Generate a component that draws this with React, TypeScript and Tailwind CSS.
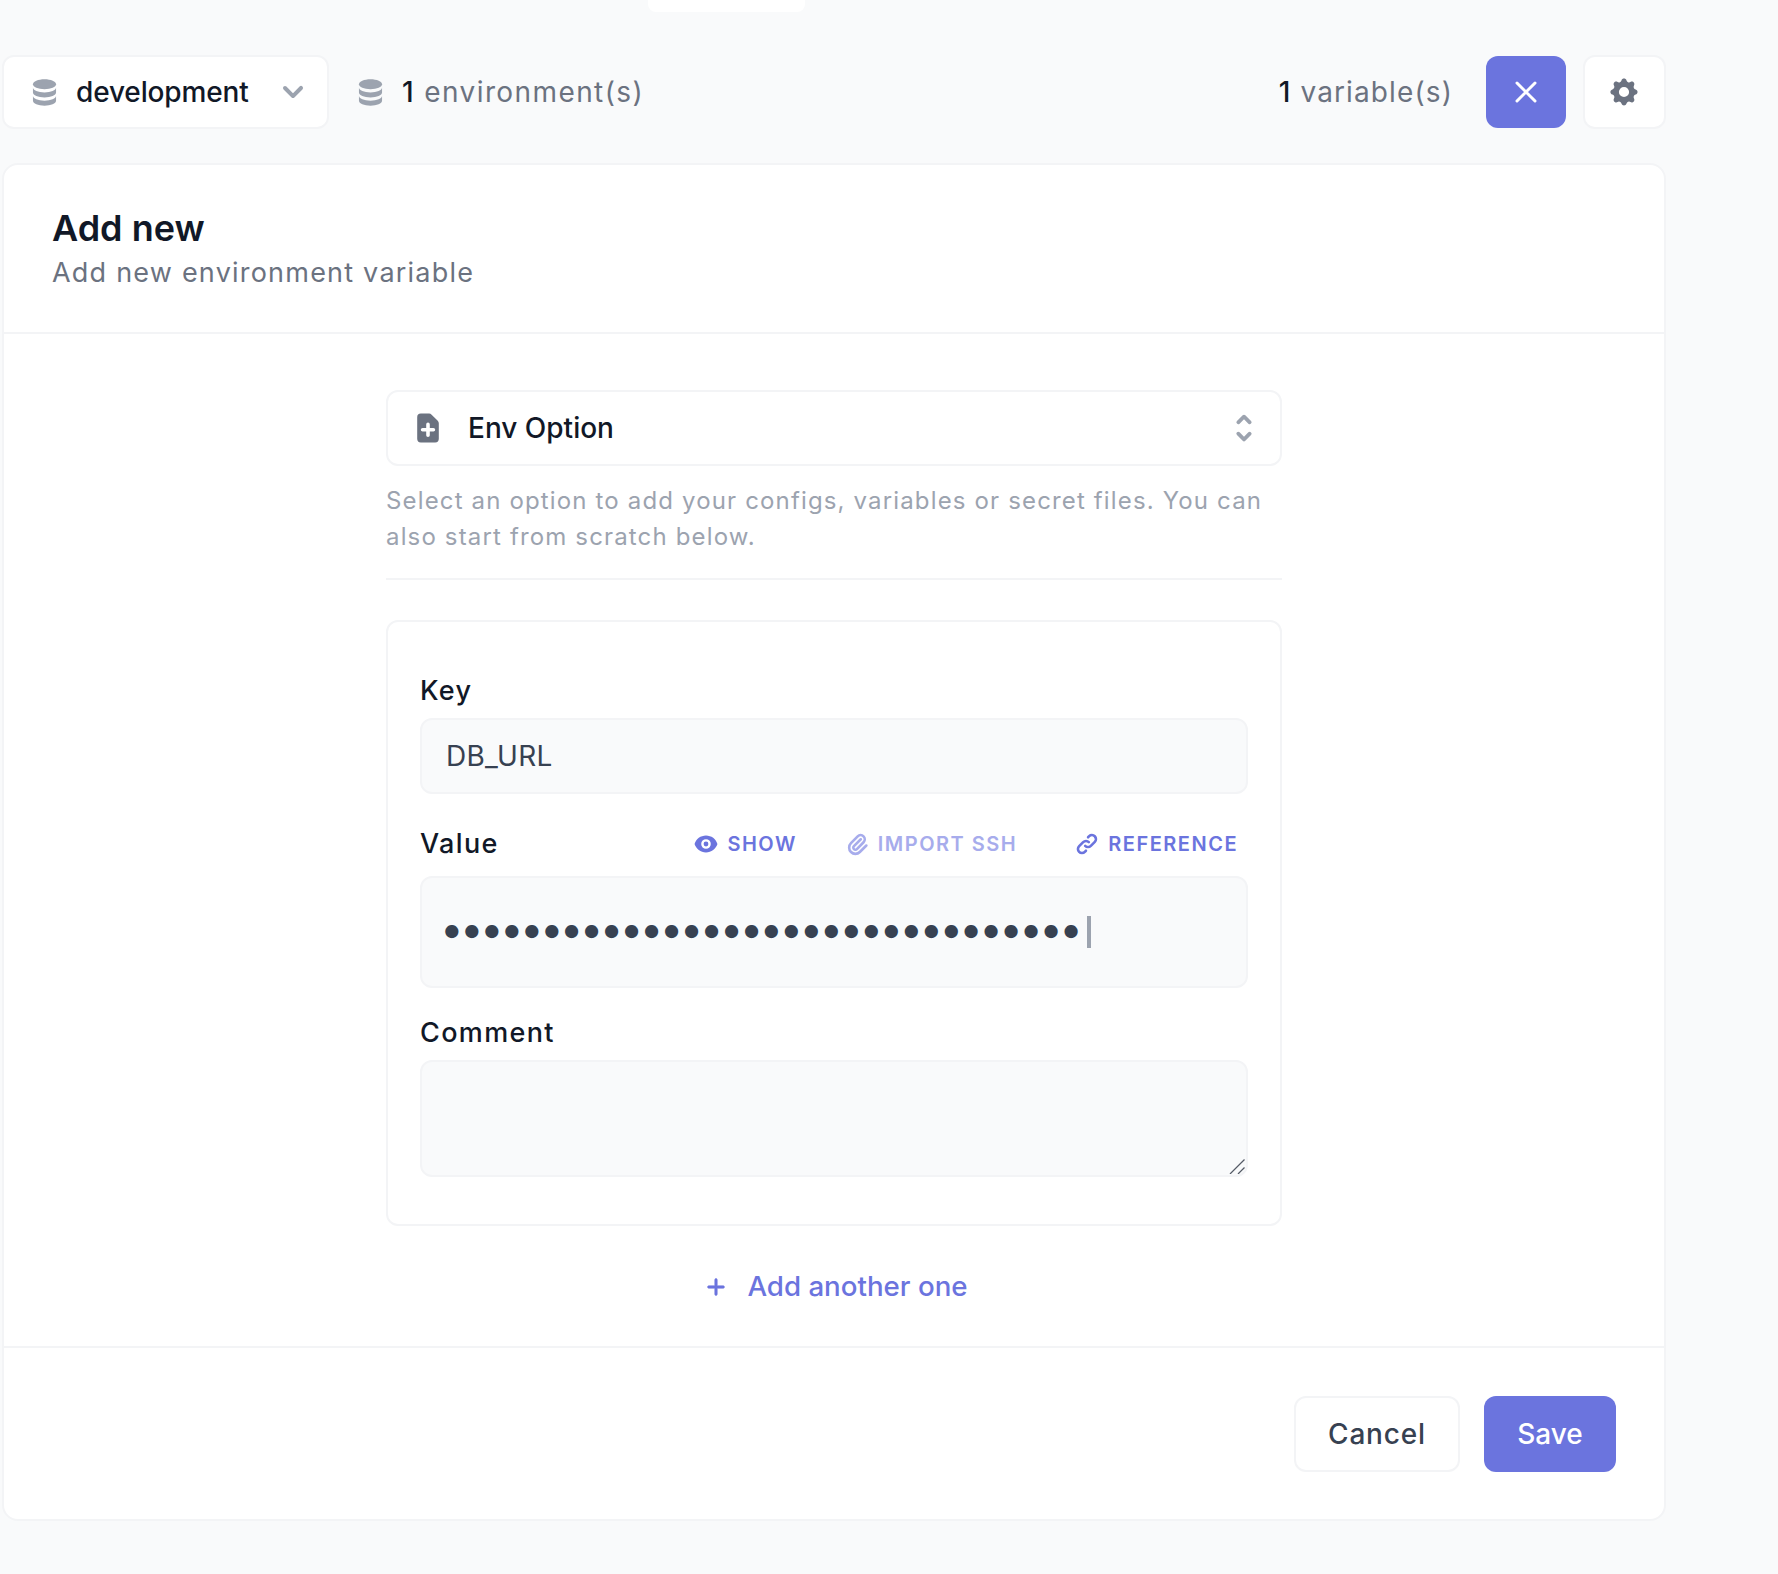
import React from "react";
import { HiDatabase, HiChevronDown, HiOutlineX, HiCog, HiDocumentAdd, HiSelector, HiEye, HiOutlinePaperClip, HiOutlineLink, HiPlus } from "react-icons/hi";

function Label({ children }: { children: React.ReactNode }) {
  return <label className="block h-[40px] text-[27px] leading-[40px] font-medium tracking-[0.05em] text-[#111827]">{children}</label>;
}

export default function App() {
  return (
    <div className="min-h-[1574px] bg-[#f9fafb] font-[Inter,sans-serif]">
      <div className="ml-[648px] h-[12px] w-[157px] rounded-b-[8px] bg-white" />
      <div className="mt-[43px] ml-[2px] flex h-[74px] w-[1664px] items-center">
        <button className="flex h-[74px] w-[327px] items-center rounded-[12px] border-2 border-[#f3f4f6] bg-white pl-[24px]">
          <HiDatabase size={33} className="text-[#9ca3af]" />
          <span className="ml-[15px] text-[28px] font-medium tracking-[-0.005em] text-[#111827]">development</span>
          <HiChevronDown size={40} className="ml-[24px] text-[#9ca3af]" />
        </button>
        <HiDatabase size={33} className="ml-[25px] text-[#9ca3af]" />
        <span className="ml-[15px] text-[28px] tracking-[0.05em] text-[#6b7280]"><span className="font-medium text-[#111827]">1</span> environment(s)</span>
        <span className="ml-auto text-[28px] tracking-[0.04em] text-[#6b7280]"><span className="font-medium text-[#111827]">1</span> variable(s)</span>
        <button className="ml-[33px] flex h-[72px] w-[80px] items-center justify-center rounded-[12px] bg-[#6b74de] text-white">
          <HiOutlineX size={36} />
        </button>
        <button className="ml-[17px] flex h-[74px] w-[83px] items-center justify-center rounded-[12px] border-2 border-[#f3f4f6] bg-white pr-[2px] text-[#6b7280]">
          <HiCog size={34} />
        </button>
      </div>
      <main className="mt-[34px] ml-[2px] w-[1664px] rounded-[16px] border-2 border-[#f3f4f6] bg-white">
        <header className="h-[169px] border-b-2 border-[#f3f4f6] pt-[41px] pl-[48px]">
          <h1 className="text-[36px] leading-[44px] font-semibold text-[#111827]">Add new</h1>
          <p className="mt-[5px] text-[27px] leading-[36px] tracking-[0.045em] text-[#6b7280]">Add new environment variable</p>
        </header>
        <section className="mx-auto w-[896px] pt-[56px]">
          <div className="flex h-[76px] items-center rounded-[12px] border-2 border-[#f3f4f6] bg-white pr-[17px] pl-[22px]">
            <HiDocumentAdd size={36} className="text-[#6b7280]" />
            <span className="ml-[22px] text-[28px] font-medium text-[#111827]">Env Option</span>
            <HiSelector size={38} className="ml-auto text-[#9ca3af]" />
          </div>
          <div className="border-b-2 border-[#f3f4f6] pt-[17px] pb-[23px]">
            <p className="text-[24px] leading-[36px] tracking-[0.048em] text-[#9ca3af]">Select an option to add your configs, variables or secret files. You can also start from scratch below.</p>
          </div>
          <div className="mt-[40px] rounded-[12px] border-2 border-[#f3f4f6] bg-white px-[32px] pt-[49px] pb-[47px]">
            <div className="mb-[7px]"><Label>Key</Label></div>
            <input readOnly value="DB_URL" className="block h-[76px] w-full rounded-[12px] border-2 border-[#f3f4f6] bg-[#f9fafb] px-[24px] text-[28px] tracking-[0.01em] text-[#374151] outline-none" />
            <div className="mt-[30px] mb-[12px] flex h-[40px] items-center">
              <Label>Value</Label>
              <button className="ml-auto flex items-center text-[20px] font-semibold tracking-[0.075em] text-[#6b74de]">
                <HiEye size={24} />
                <span className="ml-[9px]">SHOW</span>
              </button>
              <button className="ml-[48px] flex items-center text-[20px] font-semibold tracking-[0.075em] text-[#a7acec]">
                <HiOutlinePaperClip size={25} className="[&_path]:stroke-[2.5]" />
                <span className="ml-[8px]">IMPORT SSH</span>
              </button>
              <button className="mr-[10px] ml-[58px] flex items-center text-[20px] font-semibold tracking-[0.075em] text-[#6b74de]">
                <HiOutlineLink size={24} className="[&_path]:stroke-[2.6]" />
                <span className="ml-[9px]">REFERENCE</span>
              </button>
            </div>
            <div className="flex h-[112px] items-center rounded-[12px] border-2 border-[#f3f4f6] bg-[#f9fafb] pl-[18px]">
              <span className="pb-[6px] text-[42px] leading-[32px] tracking-[-3.65px] text-[#374151]">{"•".repeat(32)}</span>
              <span className="ml-[8px] h-[32px] w-[4px] shrink-0 bg-[#9ca3af]" />
            </div>
            <div className="mt-[25px] mb-[7px]"><Label>Comment</Label></div>
            <div className="relative">
              <textarea readOnly className="block h-[117px] w-full resize-none rounded-[12px] border-2 border-[#f3f4f6] bg-[#f9fafb] outline-none" />
              <svg width="16" height="15" viewBox="0 0 16 15" className="absolute right-[3px] bottom-[3px]" stroke="#555b66" strokeWidth="1.2" fill="none">
                <path d="M1 15 L15.5 0.5" />
                <path d="M9 15 L15.5 8.5" />
              </svg>
            </div>
          </div>
          <button className="mx-auto mt-[41px] mb-[39px] flex h-[40px] items-center pl-[4px] text-[27.7px] font-medium text-[#6b74de]">
            <HiPlus size={24} stroke="currentColor" strokeWidth={0.5} />
            <span className="ml-[19px]">Add another one</span>
          </button>
        </section>
        <footer className="flex justify-end gap-[24px] border-t-2 border-[#f3f4f6] pt-[48px] pr-[48px] pb-[47px]">
          <button className="h-[76px] w-[166px] rounded-[12px] border-2 border-[#f3f4f6] bg-white text-[28px] font-medium tracking-[0.03em] text-[#374151]">Cancel</button>
          <button className="h-[76px] w-[132px] rounded-[12px] bg-[#6b74de] text-[28px] font-medium text-white">Save</button>
        </footer>
      </main>
    </div>
  );
}
